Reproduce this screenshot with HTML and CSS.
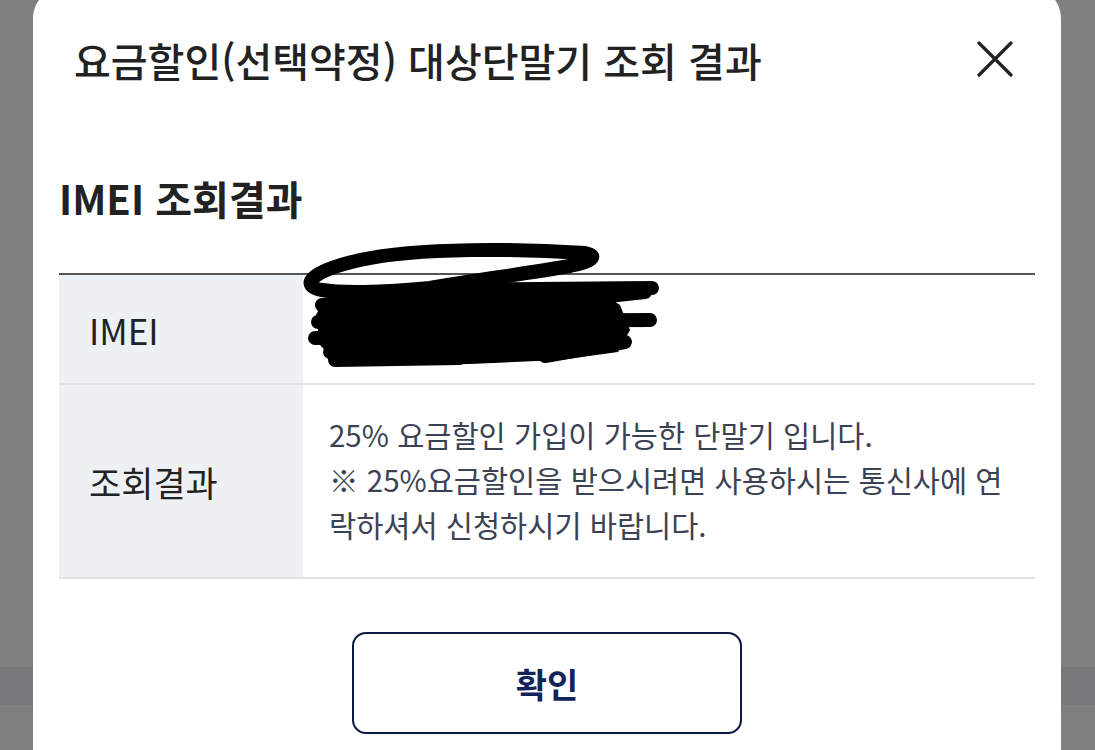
FILE: index.html
```html
<!DOCTYPE html>
<html lang="ko">
<head>
<meta charset="utf-8">
<title>대상단말기 조회 결과</title>
<link rel="stylesheet" href="styles.css">
</head>
<body>
<div class="modal">
  <div class="modal-header">
    <h1 class="modal-title">요금할인(선택약정) 대상단말기 조회 결과</h1>
    <button class="close-btn" aria-label="닫기">
      <svg width="36" height="36" viewBox="0 0 36 36"><path d="M2 2 L34 34 M34 2 L2 34" stroke="#222" stroke-width="3.2" stroke-linecap="round"/></svg>
    </button>
  </div>
  <h2 class="section-title">IMEI 조회결과</h2>
  <div class="result-table">
    <div class="row row-imei">
      <div class="label">IMEI</div>
      <div class="value value-imei">
        <svg class="scribble" width="380" height="140" viewBox="300 240 380 140">
          <g fill="none" stroke="#000" stroke-width="14" stroke-linecap="round" stroke-linejoin="round">
            <path d="M322 290 C300 286 308 272 360 260 C420 247 520 249 585 253 C600 256 590 262 570 266 C530 273 470 281 430 288 C380 293 340 293 322 290 Z"/>
            <path d="M430 290 L652 288"/>
            <path d="M322 305 L450 300"/>
            <path d="M318 322 L650 320"/>
            <path d="M315 338 L560 333"/>
            <path d="M590 298 L645 292"/>
            <path d="M330 352 L520 346"/>
            <path d="M545 356 L625 342"/>
            <path d="M335 360 L460 358"/>
          </g>
          <path d="M325 298 L480 290 L600 292 L620 305 L630 330 L618 352 L560 360 L470 364 L340 366 L320 345 L316 315 Z" fill="#000"/>
        </svg>
      </div>
    </div>
    <div class="row row-result">
      <div class="label">조회결과</div>
      <div class="value value-text">
        <p>25% 요금할인 가입이 가능한 단말기 입니다.</p>
        <p>※ 25%요금할인을 받으시려면 사용하시는 통신사에 연락하셔서 신청하시기 바랍니다.</p>
      </div>
    </div>
  </div>
  <div class="actions">
    <button class="confirm-btn">확인</button>
  </div>
</div>
</body>
</html>
```

FILE: styles.css
```css
html, body {
  margin: 0;
  padding: 0;
}
body {
  width: 1095px;
  height: 750px;
  overflow: hidden;
  position: relative;
  font-family: "Noto Sans CJK KR", "Noto Sans", sans-serif;
  background: linear-gradient(to bottom, #808080 0, #808080 667px, #77797b 667px, #77797b 705px, #808080 705px);
}
.modal {
  position: absolute;
  left: 33px;
  top: -12px;
  width: 1028px;
  height: 762px;
  box-sizing: border-box;
  background: #fff;
  border-radius: 30px 30px 0 0;
  padding: 0 26px;
}
.modal-header {
  height: 144px;
  display: flex;
  align-items: center;
  justify-content: space-between;
  padding: 0 22px 0 15px;
}
.modal-title {
  margin: 0;
  font-size: 40px;
  line-height: 52px;
  font-weight: 500;
  color: #222;
}
.close-btn {
  border: 0;
  background: none;
  padding: 0;
  width: 36px;
  height: 36px;
  display: flex;
  margin-top: -2px;
}
.section-title {
  margin: 42px 0 0 0;
  font-size: 40px;
  line-height: 48px;
  font-weight: 700;
  color: #222;
}
.result-table {
  margin-top: 51px;
  border-top: 2px solid #555;
}
.row {
  display: flex;
  border-bottom: 2px solid #e2e2e4;
}
.row-imei {
  height: 108px;
}
.row-result {
  height: 192px;
}
.label {
  width: 244px;
  flex-shrink: 0;
  background: #eef1f3;
  display: flex;
  align-items: center;
  padding-left: 30px;
  box-sizing: border-box;
  font-size: 35px;
  color: #222;
}
.value {
  flex: 1;
  position: relative;
}
.scribble {
  position: absolute;
  left: -3px;
  top: -35px;
}
.value-text {
  display: flex;
  flex-direction: column;
  justify-content: center;
  padding: 0 16px 4px 26px;
  font-size: 29.5px;
  line-height: 45px;
  color: #3b4254;
}
.value-text p {
  margin: 0;
}
.actions {
  display: flex;
  justify-content: center;
  margin-top: 53px;
}
.confirm-btn {
  width: 390px;
  height: 102px;
  border: 2px solid #0d1842;
  border-radius: 14px;
  background: #fff;
  font-family: "Noto Sans CJK KR", "Noto Sans", sans-serif;
  font-size: 34px;
  font-weight: 700;
  color: #14245a;
}
```
